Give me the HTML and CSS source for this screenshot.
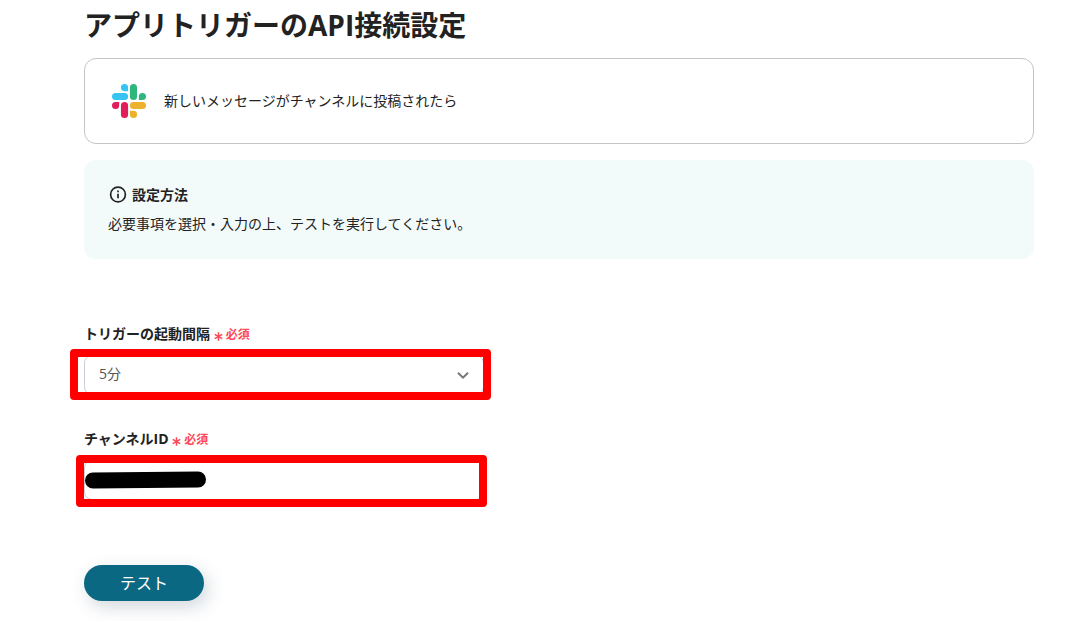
FILE: index.html
```
<!DOCTYPE html>
<html lang="ja">
<head>
  <meta charset="utf-8">
  <title>アプリトリガーのAPI接続設定</title>
  <link rel="stylesheet" href="styles.css">
</head>
<body>
  <main class="page">
    <h1>アプリトリガーのAPI接続設定</h1>

    <div class="app-card">
      <svg class="app-logo" viewBox="0 0 122.8 122.8" role="img" aria-label="Slack">
        <path fill="#e01e5a" d="M25.8 77.6a12.9 12.9 0 1 1-12.9-12.9h12.9zm6.5 0a12.9 12.9 0 0 1 25.8 0v32.3a12.9 12.9 0 0 1-25.8 0z"/>
        <path fill="#36c5f0" d="M45.2 25.8a12.9 12.9 0 1 1 12.9-12.9v12.9zm0 6.5a12.9 12.9 0 0 1 0 25.8H12.9a12.9 12.9 0 0 1 0-25.8z"/>
        <path fill="#2eb67d" d="M97 45.2a12.9 12.9 0 1 1 12.9 12.9H97zm-6.5 0a12.9 12.9 0 0 1-25.8 0V12.9a12.9 12.9 0 0 1 25.8 0z"/>
        <path fill="#ecb22e" d="M77.6 97a12.9 12.9 0 1 1-12.9 12.9V97zm0-6.5a12.9 12.9 0 0 1 0-25.8h32.3a12.9 12.9 0 0 1 0 25.8z"/>
      </svg>
      <span>新しいメッセージがチャンネルに投稿されたら</span>
    </div>

    <section class="guide">
      <h2>
        <svg class="info-icon" viewBox="0 0 20 20" fill="none" stroke="currentColor">
          <circle cx="10" cy="9.5" r="7.4" stroke-width="1.7"/>
          <path d="M10 8.7v4.6M10 5.5v1.7" stroke-width="1.7"/>
        </svg>
        設定方法
      </h2>
      <p>必要事項を選択・入力の上、テストを実行してください。</p>
    </section>

    <form class="settings">
      <div class="field">
        <label for="interval">トリガーの起動間隔 <span class="required"><svg class="asterisk" viewBox="0 0 10 10" stroke="currentColor"><path d="M5 .2v9.6M.8 2.6l8.4 4.8M9.2 2.6L.8 7.4" stroke-width="1.7"/></svg> 必須</span></label>
        <div class="control">
          <select id="interval">
            <option>5分</option>
          </select>
          <svg class="chevron" viewBox="0 0 12 12" fill="none" stroke="currentColor">
            <path d="M1 3.7l5 5 5-5" stroke-width="2"/>
          </svg>
          <span class="highlight highlight-select"></span>
        </div>
      </div>

      <div class="field">
        <label for="channel">チャンネルID <span class="required"><svg class="asterisk" viewBox="0 0 10 10" stroke="currentColor"><path d="M5 .2v9.6M.8 2.6l8.4 4.8M9.2 2.6L.8 7.4" stroke-width="1.7"/></svg> 必須</span></label>
        <div class="control">
          <input type="text" id="channel">
          <span class="redaction"></span>
          <span class="highlight highlight-input"></span>
        </div>
      </div>

      <button type="button" class="test-button">テスト</button>
    </form>
  </main>
</body>
</html>
```
FILE: styles.css
```
* {
  box-sizing: border-box;
}

body {
  margin: 0;
  background: #fff;
  color: #222;
  font-family: "Open Sans", "Noto Sans CJK JP", sans-serif;
  font-size: 14px;
  line-height: 22px;
}

.page {
  padding: 5px 33px 20px 84px;
}

h1 {
  margin: 0 0 13px;
  font-size: 28px;
  line-height: 40px;
  font-weight: 700;
}

.app-card {
  display: flex;
  align-items: center;
  gap: 18px;
  padding: 25px 27px;
  border: 1px solid #c4c4c4;
  border-radius: 12px;
}

.app-logo {
  width: 34px;
  height: 34px;
}

.guide {
  margin-top: 16px;
  padding: 24px;
  border-radius: 12px;
  background: #f2fafa;
}

.guide h2 {
  display: flex;
  align-items: center;
  gap: 4px;
  margin: 0 0 7px;
  font-size: 14px;
  font-weight: 700;
}

.guide p {
  margin: 0;
}

.info-icon {
  width: 20px;
  height: 20px;
}

.settings {
  max-width: 400px;
  margin-top: 64px;
}

.field {
  margin-bottom: 33px;
}

.field label {
  display: block;
  margin-bottom: 9px;
  font-weight: 700;
}

.required {
  color: #ff4757;
  font-size: 12px;
}

.asterisk {
  width: 9px;
  height: 9px;
  vertical-align: -2px;
}

.control {
  position: relative;
}

.control select,
.control input {
  display: block;
  width: 100%;
  height: 40px;
  padding: 0 14px 2px;
  border: 1px solid #c9ced6;
  border-radius: 8px;
  background: #fff;
  color: #555;
  font: inherit;
  appearance: none;
  outline: none;
}

.chevron {
  position: absolute;
  top: 14px;
  right: 15px;
  width: 12px;
  height: 12px;
  color: #777;
  pointer-events: none;
}

/* red frames drawn over the controls */
.highlight {
  position: absolute;
  border: 8px solid #f00;
  border-radius: 4px;
  pointer-events: none;
}

.highlight-select {
  inset: -6px -7px -5px -14px;
}

.highlight-input {
  inset: -5px -3px -7px -8px;
}

.redaction {
  position: absolute;
  top: 12px;
  left: 1px;
  width: 121px;
  height: 16px;
  border-radius: 8px;
  background: #000;
  transform: rotate(-0.5deg);
}

.test-button {
  display: block;
  width: 120px;
  height: 36px;
  margin-top: 65px;
  padding: 0 0 2px;
  border: 0;
  border-radius: 18px;
  background: #0b6882;
  box-shadow: 4px 6px 18px rgba(30, 60, 80, 0.2);
  color: #fff;
  font-family: inherit;
  font-size: 16px;
  cursor: pointer;
}
```
